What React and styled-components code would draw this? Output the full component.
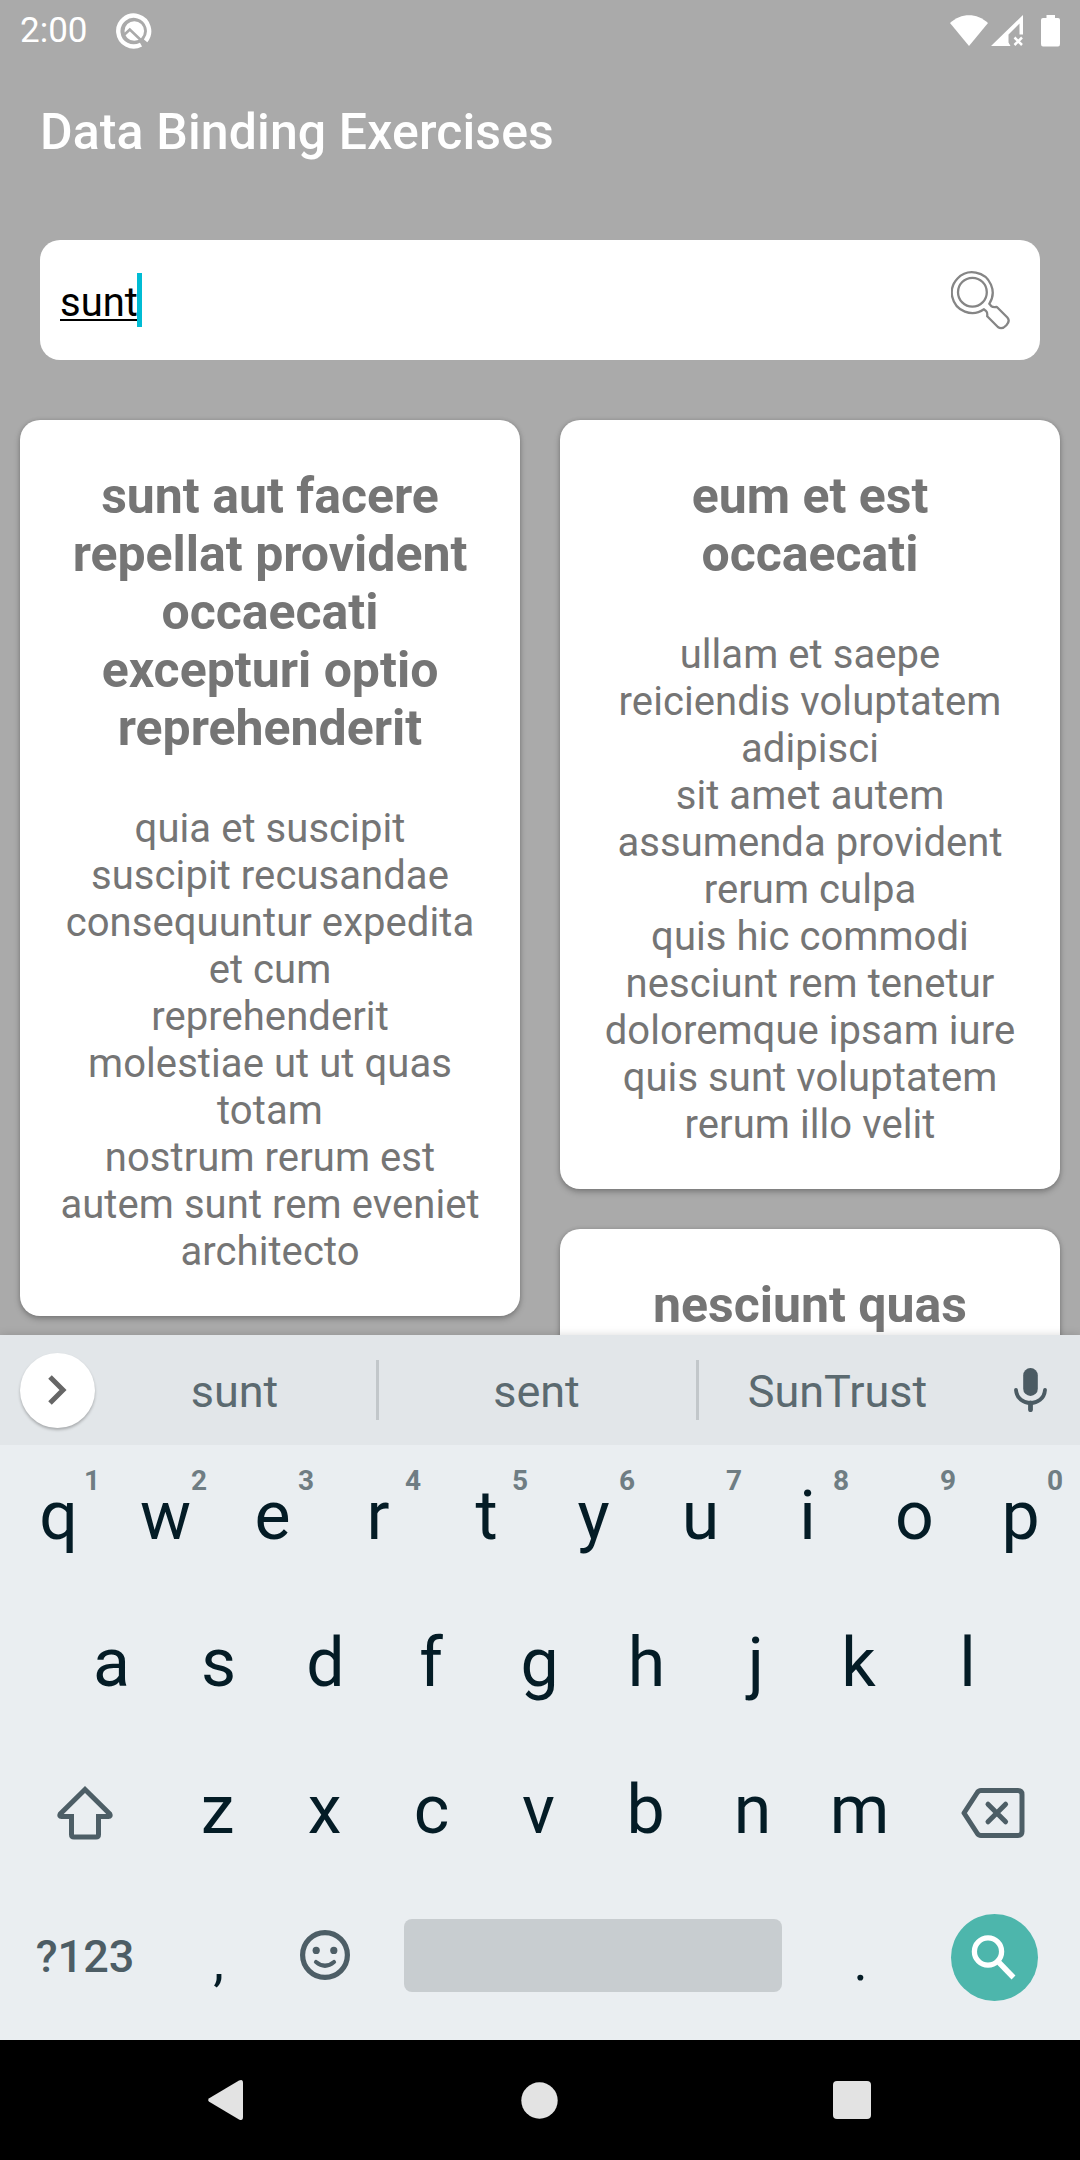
import React from "react";
import styled, { createGlobalStyle } from "styled-components";

const GlobalStyle = createGlobalStyle`
  * { box-sizing: border-box; }
  body { margin: 0; background: #aaaaaa; }
`;

const Screen = styled.div`
  width: 1080px;
  height: 2160px;
  display: flex;
  flex-direction: column;
  overflow: hidden;
  background: #aaaaaa;
  font-family: Roboto, "Liberation Sans", sans-serif;
`;

const AppArea = styled.main`
  height: 1335px;
  flex: none;
  display: flex;
  flex-direction: column;
  overflow: hidden;
`;

const StatusBar = styled.header`
  height: 62px;
  flex: none;
  display: flex;
  align-items: center;
  justify-content: space-between;
  padding: 0 18px 0 20px;
  color: #ffffff;
`;

const StatusGroup = styled.div`
  display: flex;
  align-items: center;
  gap: ${(p) => p.$gap}px;
  svg { display: block; flex: none; }
`;

const Clock = styled.span`
  font-size: 35px;
  line-height: 62px;
`;

const Toolbar = styled.div`
  height: 178px;
  flex: none;
  padding: 41px 40px 0;
`;

const Title = styled.h1`
  margin: 0;
  font-size: 50px;
  line-height: 58px;
  font-weight: 500;
  letter-spacing: 0.12px;
  color: #ffffff;
`;

const SearchBox = styled.div`
  flex: none;
  height: 120px;
  margin: 0 40px;
  padding: 0 29px 0 20px;
  display: flex;
  align-items: center;
  border-radius: 20px;
  background: #ffffff;
  svg { display: block; margin-left: auto; }
`;

const Query = styled.span`
  height: 50px;
  padding-top: 5px;
  font-size: 40px;
  line-height: 46px;
  color: #000000;
  background: linear-gradient(#000, #000) 0 44px / 78px 2px no-repeat;
`;

const Caret = styled.i`
  width: 5px;
  height: 54px;
  margin-left: -1px;
  background: #00bcd4;
`;

const Columns = styled.div`
  display: grid;
  grid-template-columns: 500px 500px;
  gap: 40px;
  align-items: start;
  padding: 60px 20px 0;
`;

const Column = styled.div`
  display: flex;
  flex-direction: column;
  gap: 40px;
`;

const Card = styled.article`
  padding: 47px 20px 41px;
  border-radius: 20px;
  background: #ffffff;
  box-shadow: 0 3px 6px rgba(0, 0, 0, 0.26), 0 0 4px rgba(0, 0, 0, 0.12);
  color: #757575;
  text-align: center;
  white-space: pre;
`;

const CardTitle = styled.h2`
  margin: 0;
  font-size: 50px;
  line-height: 58px;
  font-weight: 700;
`;

const CardBody = styled.p`
  margin: 48px 0 0;
  font-size: 40px;
  line-height: 47px;
  letter-spacing: 0.07px;
`;

const Keyboard = styled.section`
  position: relative;
  flex: none;
  height: 705px;
  display: flex;
  flex-direction: column;
  background: #eaeef1;
  box-shadow: 0 -1px 8px rgba(0, 0, 0, 0.12);
`;

const Suggestions = styled.div`
  height: 110px;
  flex: none;
  display: flex;
  align-items: center;
  padding-left: 20px;
  background: #e2e6e9;
`;

const Expand = styled.button`
  width: 75px;
  height: 75px;
  padding: 0 1px 0 0;
  border: 0;
  border-radius: 50%;
  display: flex;
  align-items: center;
  justify-content: center;
  background: #ffffff;
  box-shadow: 0 2px 3px rgba(0, 0, 0, 0.26);
`;

const Suggestion = styled.span`
  width: ${(p) => p.$width}px;
  padding: 3px 2px 0 0;
  text-align: center;
  font-size: 45px;
  line-height: 60px;
  color: #5b6a70;
`;

const Divider = styled.i`
  width: 3px;
  height: 60px;
  background: #c2c7ca;
`;

const MicSlot = styled.div`
  display: flex;
  margin-left: 36px;
`;

const Row = styled.div`
  height: 147px;
  flex: none;
  display: flex;
  padding-left: ${(p) => p.$inset}px;
`;

const Key = styled.div`
  position: relative;
  flex: none;
  width: ${(p) => p.$width || 107}px;
  height: 147px;
  padding-bottom: ${(p) => p.$lift ?? 5}px;
  text-indent: ${(p) => p.$nudge || 0}px;
  display: flex;
  align-items: center;
  justify-content: center;
  font-size: 68px;
  line-height: 80px;
  color: #041c26;
  svg { display: block; }
`;

const SymbolsKey = styled(Key)`
  font-size: 45px;
  font-weight: 500;
  color: #4d5d65;
`;

const PunctuationKey = styled(Key)`
  padding: 4px 0 0;
  font-size: 54px;
`;

const Hint = styled.sup`
  position: absolute;
  top: 21px;
  left: 77px;
  width: 20px;
  text-align: center;
  text-indent: 0;
  font-size: 28px;
  line-height: 30px;
  font-weight: 700;
  color: #6f7d83;
`;

const SpaceBar = styled.div`
  width: 378px;
  height: 73px;
  border-radius: 8px;
  background: #c8cdd0;
`;

const SearchKey = styled.div`
  width: 87px;
  height: 87px;
  padding: 0 1px 2px 0;
  border-radius: 50%;
  display: flex;
  align-items: center;
  justify-content: center;
  background: #4db6ac;
`;

const NavBar = styled.nav`
  flex: none;
  height: 120px;
  display: flex;
  align-items: center;
  justify-content: space-between;
  padding: 0 209px 0 208px;
  background: #000000;
  svg { display: block; }
`;

const HomeButton = styled.div`
  padding-left: 3px;
`;

const NotificationIcon = () => (
  <svg width="36" height="36" viewBox="0 0 36 36" fill="none">
    <path d="M29.6 27.8 A15.4 15.4 0 1 0 25 31.6" stroke="#fff" strokeWidth="4.4" />
    <circle cx="18.3" cy="18" r="9.8" fill="#fff" />
    <path d="M8 22 L13.8 16.6 L29.5 31.5" stroke="#aaa" strokeWidth="2.6" />
  </svg>
);

const StatusIcons = () => (
  <svg width="114" height="36" viewBox="0 0 114 36" fill="#fff">
    <path d="M2 10 C13 -0.5 29 -0.5 40 10 L21 33 Z" />
    <path fillRule="evenodd" d="M75 2 V21.5 H71.5 V10.5 L60.5 21.5 V29.5 L62.5 33 H43 Z" />
    <path d="M66.5 24.5 L74 32 M74 24.5 L66.5 32" stroke="#fff" strokeWidth="2.5" />
    <path d="M98.5 2 H107 V5 H110 Q112 5 112 7 V31 Q112 33.5 110 33.5 H95 Q93 33.5 93 31 V7 Q93 5 95 5 H98.5 Z" />
  </svg>
);

const MagnifierOutline = () => (
  <svg width="60" height="60" viewBox="0 0 60 60" fill="none" stroke="#858585" strokeWidth="2.3" strokeLinejoin="round">
    <circle cx="21.4" cy="22.2" r="14.4" />
    <path d="M33 39.3 A20.4 20.4 0 1 1 38.3 33.8 L40.6 36.4 Q41.7 37.4 45.9 37 L56.4 47.5 Q59.4 51 55.4 55.2 Q50.9 60 46.9 57 L36.2 46.3 Q36.6 42.2 35.2 41.2 Z" />
  </svg>
);

const Chevron = () => (
  <svg width="19" height="30" viewBox="0 0 19 30" fill="none" stroke="#666" strokeWidth="5">
    <path d="M2 2 L15 15 L2 28" />
  </svg>
);

const Mic = () => (
  <svg width="33" height="44" viewBox="0 0 33 44">
    <rect x="9.2" y="0" width="14.6" height="28" rx="7.3" fill="#4b5b63" />
    <path d="M2 22 C3.5 39.5 29.5 39.5 31 22" fill="none" stroke="#4b5b63" strokeWidth="3.8" strokeLinecap="round" />
    <path d="M16.5 35 V41.7" stroke="#4b5b63" strokeWidth="4.8" strokeLinecap="round" />
  </svg>
);

const Shift = () => (
  <svg width="56" height="56" viewBox="0 0 56 56" fill="none" stroke="#4d5e66" strokeWidth="5">
    <path d="M28 4.5 L3.2 29 Q2 31.5 4.5 31.5 H14.5 V49.5 Q14.5 52 17 52 H39 Q41.5 52 41.5 49.5 V31.5 H51.5 Q54 31.5 52.8 29 Z" />
  </svg>
);

const Backspace = () => (
  <svg width="64" height="50" viewBox="0 0 64 50" fill="none" stroke="#4d5e66" strokeWidth="5" strokeLinejoin="round">
    <path d="M20 2.5 H57 Q61 2.5 61 6.5 V43.5 Q61 47.5 57 47.5 H20 Q17.5 47.5 16 45 L3 25 L16 5 Q17.5 2.5 20 2.5 Z" />
    <path d="M27 16.2 L44.6 33.8 M44.6 16.2 L27 33.8" strokeLinecap="round" />
  </svg>
);

const Smiley = () => (
  <svg width="50" height="50" viewBox="0 0 50 50" fill="none" stroke="#4d5e66">
    <circle cx="25" cy="25" r="22.4" strokeWidth="5.2" />
    <circle cx="16.2" cy="20.4" r="3.6" fill="#4d5e66" stroke="none" />
    <circle cx="33.8" cy="20.4" r="3.6" fill="#4d5e66" stroke="none" />
    <path d="M16 32 Q25 39.6 34 32" strokeWidth="4.2" strokeLinecap="round" />
  </svg>
);

const MagnifierSolid = () => (
  <svg width="46" height="46" viewBox="0 0 46 46" fill="none" stroke="#fff">
    <circle cx="17" cy="17.5" r="13.6" strokeWidth="5.3" />
    <path d="M28 28.5 L42.5 43.5" strokeWidth="5.4" />
  </svg>
);

const posts = {
  left: [
    {
      title: "sunt aut facere\nrepellat provident\noccaecati\nexcepturi optio\nreprehenderit",
      body: "quia et suscipit\nsuscipit recusandae\nconsequuntur expedita\net cum\nreprehenderit\nmolestiae ut ut quas\ntotam\nnostrum rerum est\nautem sunt rem eveniet\narchitecto",
    },
  ],
  right: [
    {
      title: "eum et est\noccaecati",
      body: "ullam et saepe\nreiciendis voluptatem\nadipisci\nsit amet autem\nassumenda provident\nrerum culpa\nquis hic commodi\nnesciunt rem tenetur\ndoloremque ipsam iure\nquis sunt voluptatem\nrerum illo velit",
    },
    { title: "nesciunt quas" },
  ],
};

const nudges = { r: -3, f: -3, j: 5, k: -4, p: -2 };

const PostColumn = ({ items }) => (
  <Column>
    {items.map((post) => (
      <Card key={post.title}>
        <CardTitle>{post.title}</CardTitle>
        {post.body && <CardBody>{post.body}</CardBody>}
      </Card>
    ))}
  </Column>
);

export default function App() {
  return (
    <Screen>
      <GlobalStyle />
      <AppArea>
        <StatusBar>
          <StatusGroup $gap={28}>
            <Clock>2:00</Clock>
            <NotificationIcon />
          </StatusGroup>
          <StatusGroup $gap={0}>
            <StatusIcons />
          </StatusGroup>
        </StatusBar>
        <Toolbar>
          <Title>Data Binding Exercises</Title>
        </Toolbar>
        <SearchBox>
          <Query>sunt</Query>
          <Caret />
          <MagnifierOutline />
        </SearchBox>
        <Columns>
          <PostColumn items={posts.left} />
          <PostColumn items={posts.right} />
        </Columns>
      </AppArea>
      <Keyboard>
        <Suggestions>
          <Expand>
            <Chevron />
          </Expand>
          <Suggestion $width={281}>sunt</Suggestion>
          <Divider />
          <Suggestion $width={317}>sent</Suggestion>
          <Divider />
          <Suggestion $width={279}>SunTrust</Suggestion>
          <MicSlot>
            <Mic />
          </MicSlot>
        </Suggestions>
        <Row $inset={5}>
          {[..."qwertyuiop"].map((letter, i) => (
            <Key key={letter} $nudge={nudges[letter]}>
              {letter}
              <Hint>{(i + 1) % 10}</Hint>
            </Key>
          ))}
        </Row>
        <Row $inset={58}>
          {[..."asdfghjkl"].map((letter) => (
            <Key key={letter} $nudge={nudges[letter]}>{letter}</Key>
          ))}
        </Row>
        <Row $inset={5}>
          <Key $width={159} $lift={0}>
            <Shift />
          </Key>
          {[..."zxcvbnm"].map((letter) => (
            <Key key={letter}>{letter}</Key>
          ))}
          <Key $width={160} $lift={-1}>
            <Backspace />
          </Key>
        </Row>
        <Row $inset={5}>
          <SymbolsKey $width={160} $lift={6}>?123</SymbolsKey>
          <PunctuationKey>,</PunctuationKey>
          <Key $width={106} $lift={9}>
            <Smiley />
          </Key>
          <Key $width={429} $lift={8}>
            <SpaceBar />
          </Key>
          <PunctuationKey>.</PunctuationKey>
          <Key $width={160} $lift={4}>
            <SearchKey>
              <MagnifierSolid />
            </SearchKey>
          </Key>
        </Row>
      </Keyboard>
      <NavBar>
        <svg width="35" height="40" viewBox="0 0 35 40" fill="#e3e3e3">
          <path d="M31 0.6 Q35 -1.2 35 3 V37 Q35 41.2 31 39.4 L1.2 21.8 Q-0.8 20 1.2 18.2 Z" />
        </svg>
        <HomeButton>
          <svg width="37" height="37" viewBox="0 0 37 37" fill="#e3e3e3">
            <circle cx="18.5" cy="18.5" r="18.2" />
          </svg>
        </HomeButton>
        <svg width="38" height="38" viewBox="0 0 38 38" fill="#e3e3e3">
          <rect width="38" height="38" rx="4" />
        </svg>
      </NavBar>
    </Screen>
  );
}
